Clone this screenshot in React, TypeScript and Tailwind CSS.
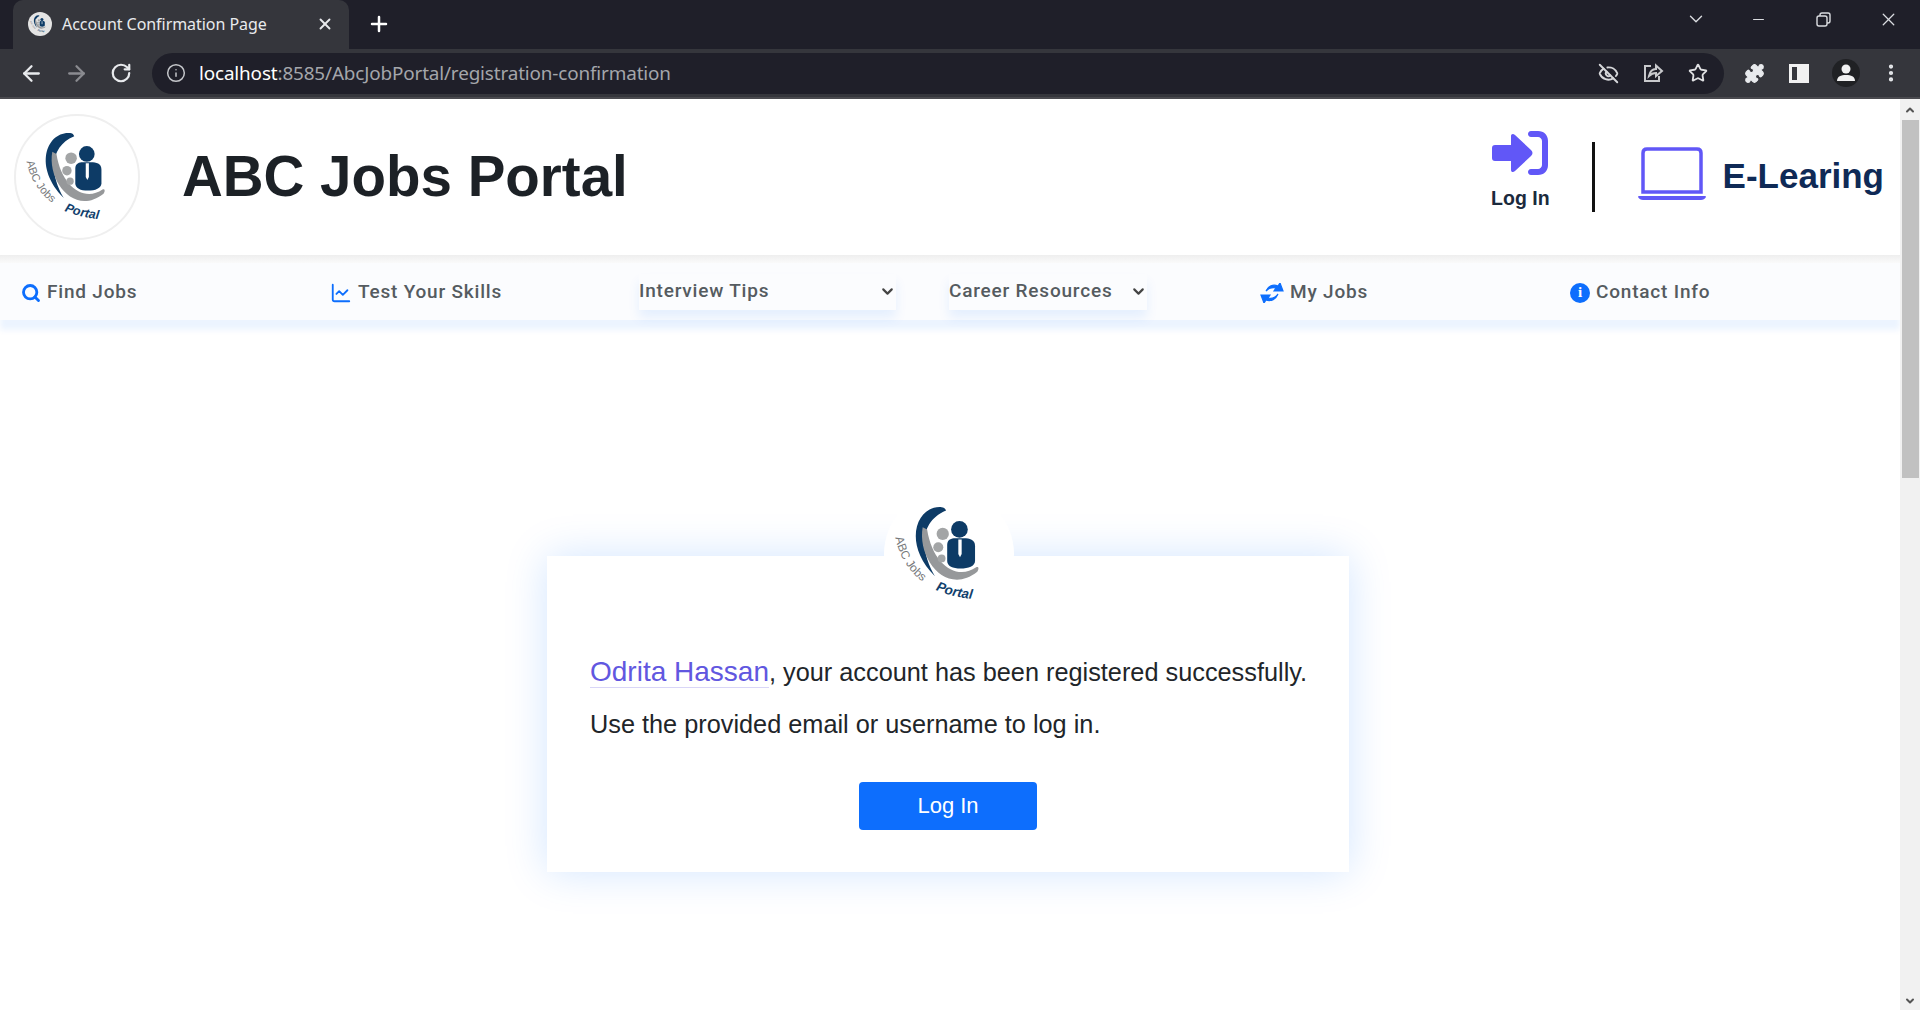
import React from 'react';
import { ArrowLeft, ArrowRight, RotateCw, Info, EyeOff, Star, Puzzle, MoreVertical, ChevronDown, X, Plus, Minus, Search, LineChart } from 'lucide-react';

// The round ABC Jobs mark, used in the header and on top of the card
const Logo: React.FC<{ size: number; id: string }> = ({ size, id }) => (
  <svg width={size} height={size} viewBox="0 0 126 126">
    <defs>
      <path id={`${id}-a`} d="M11 47 C 15 68, 28 86, 47 96" fill="none" />
      <path id={`${id}-b`} d="M50 98 C 62 103, 76 106, 92 107" fill="none" />
    </defs>
    <g transform="translate(58 50) scale(1.08) translate(-58 -50)">
      <path d="M56 20 C 34 18, 20 52, 50 82 C 38 62, 34 34, 60 23 C 59 21, 58 20, 56 20 Z" fill="#0d3b66" />
      <path d="M39 38 C 34 66, 60 100, 88 78 C 90 75, 89 73, 87 74 C 70 86, 48 72, 43 40 Z" fill="#96989a" />
      <circle cx="57" cy="44" r="5.5" fill="#a3a5a6" />
      <circle cx="53" cy="56" r="4.5" fill="#a3a5a6" />
      <circle cx="56" cy="66" r="3.5" fill="#a3a5a6" />
      <circle cx="72" cy="40" r="7.5" fill="#0d3b66" />
      <path d="M61 54 C 61 49, 65 48, 68 48 L 76 48 C 81 48, 86 49, 86 55 L 86 68 C 86 73, 80 75, 73 75 C 66 75, 61 73, 61 68 Z" fill="#0d3b66" />
      <path d="M71 49 L 74 49 L 74 62 L 72.5 65 L 71 62 Z" fill="#fff" />
    </g>
    <text fontFamily="'Liberation Sans', sans-serif" fontSize="11.5" fill="#77797b">
      <textPath href={`#${id}-a`}>ABC Jobs</textPath>
    </text>
    <text fontFamily="'Liberation Sans', sans-serif" fontSize="13" fontWeight="700" fontStyle="italic" fill="#123f6d">
      <textPath href={`#${id}-b`}>Portal</textPath>
    </text>
  </svg>
);

const NavLabel: React.FC<{ icon?: React.ReactNode; label: string }> = ({ icon, label }) => (
  <div className="flex items-center gap-[6px] pt-[2px]">
    {icon}
    <span>{label}</span>
  </div>
);

const NavSelect: React.FC<{ label: string; width: string }> = ({ label, width }) => (
  <div className={`flex h-[36px] items-center justify-between shadow-[0_8px_12px_rgba(13,110,253,0.09)] ${width}`}>
    <span>{label}</span>
    <ChevronDown size={17} strokeWidth={3} className="text-[#444]" />
  </div>
);

const BrowserChrome = () => (
  <div className="font-['Noto_Sans',sans-serif] text-[#e8eaed]">
    <div className="flex h-[49px] items-start bg-[#1f1f29] pl-[13px]">
      <div className="flex h-[49px] w-[336px] items-center rounded-t-[10px] bg-[#35363c] pb-[1px] pl-[15px] pr-[15px]">
        <div className="flex h-[24px] w-[24px] items-center justify-center overflow-hidden rounded-full bg-[#e4e4e4]">
          <Logo size={24} id="logo-tab" />
        </div>
        <span className="ml-[10px] flex-1 text-[16px] tracking-[-0.05px]">Account Confirmation Page</span>
        <X size={18} strokeWidth={2.5} />
      </div>
      <div className="ml-[18px] flex h-[48px] items-center">
        <Plus size={24} strokeWidth={2.5} className="text-white" />
      </div>
      <div className="flex h-full flex-1 items-start justify-end pt-[8px] text-[#dadce0]">
        <ChevronDown size={22} strokeWidth={1.5} className="mr-[43px]" />
        <Minus size={17} strokeWidth={1.5} className="mr-[48px] mt-[3px]" />
        <svg width="17" height="17" viewBox="0 0 17 17" fill="none" stroke="currentColor" strokeWidth="1.4" className="mr-[46px] mt-[3px]">
          <rect x="2" y="5" width="10" height="10" rx="2" />
          <path d="M5 5 V4 C5 2.8 5.8 2 7 2 H13 C14.2 2 15 2.8 15 4 V10 C15 11.2 14.2 12 13 12 H12" />
        </svg>
        <X size={21} strokeWidth={1.5} className="mr-[21px] mt-[1px]" />
      </div>
    </div>
    <div className="flex h-[50px] items-center border-b-2 border-[#4a4a4f] bg-[#35363c]">
      <ArrowLeft size={25} strokeWidth={2.2} className="ml-[19px]" />
      <ArrowRight size={25} strokeWidth={2.2} className="ml-[20px] text-[#8a8b90]" />
      <RotateCw size={22} strokeWidth={2.4} className="ml-[21px]" />
      <div className="ml-[20px] flex h-[41px] w-[1572px] items-center rounded-full bg-[#1f1f29] pl-[14px] pr-[16px]">
        <Info size={20} strokeWidth={1.8} className="text-[#c4c6ca]" />
        <div className="ml-[13px] flex-1 text-[18.9px] tracking-[-0.15px]">
          <span className="text-white">localhost</span>
          <span className="text-[#a4a6ab]">:8585/AbcJobPortal/registration-confirmation</span>
        </div>
        <EyeOff size={21} strokeWidth={2.2} className="text-[#d6d7da]" />
        <svg width="22" height="22" viewBox="0 0 22 22" fill="none" stroke="#c8c9cc" strokeWidth="2" className="ml-[23px]">
          <path d="M9 4 H3 V19 H17 V14" />
          <path d="M7 14 C8 9 11 7 14 7 V3.5 L20 9 L14 14 V11 C11 11 9 12 7 14 Z" />
        </svg>
        <Star size={20} strokeWidth={2.2} className="ml-[24px] text-[#dfe0e2]" />
      </div>
      <Puzzle size={21} fill="#e8eaed" strokeWidth={1.5} className="ml-[20px]" />
      <div className="ml-[24px] flex h-[19px] w-[20px] justify-end border-[3px] border-[#f1f1f1]">
        <div className="w-[9px] bg-[#f1f1f1]" />
      </div>
      <div className="ml-[23px] flex h-[28px] w-[28px] items-center justify-center rounded-full bg-[#202124]">
        <svg width="20" height="20" viewBox="0 0 20 20" fill="#f1f1f1">
          <circle cx="10" cy="6" r="4.5" />
          <path d="M1 18 C1 13.5 5 12 10 12 C15 12 19 13.5 19 18 Z" />
        </svg>
      </div>
      <MoreVertical size={22} strokeWidth={2.6} className="ml-[20px]" />
    </div>
  </div>
);

const Scrollbar = () => (
  <div className="flex w-[20px] flex-col items-center bg-[#f1f1f1]">
    <ChevronDown size={12} strokeWidth={4} className="mt-[5px] rotate-180 text-[#555]" />
    <div className="mt-[4px] h-[358px] w-[17px] bg-[#c1c1c1]" />
    <div className="flex-1" />
    <ChevronDown size={12} strokeWidth={4} className="mb-[3px] text-[#555]" />
  </div>
);

const App: React.FC = () => {
  return (
    <div className="flex h-[1010px] flex-col overflow-hidden bg-white font-['Liberation_Sans',sans-serif]">
      <BrowserChrome />
      <div className="flex min-h-0 flex-1">
        <div className="min-w-0 flex-1">
          {/* Top header */}
          <header className="flex h-[156px] items-center bg-white pl-[14px] pr-[16px]">
            <div className="rounded-full border-2 border-[#efefef]">
              <Logo size={122} id="logo-header" />
            </div>
            <h1 className="ml-[42px] flex-1 text-[56.5px] font-bold text-[#1c2126]">ABC Jobs Portal</h1>
            <div className="mb-[12px] flex flex-col items-center">
              <svg width="58" height="50" viewBox="0 2 58 46" fill="#6157f7">
                <path d="M1 20 C1 18 2 17 4 17 H20 V8 C20 6 22 5 24 7 L40 22 C42 24 42 26 40 28 L24 43 C22 45 20 44 20 42 V33 H4 C2 33 1 32 1 30 Z" />
                <path d="M40 3 H47 C53 3 57 7 57 13 V37 C57 43 53 47 47 47 H40 C36 47 36 41 40 41 H47 C49 41 51 39 51 37 V13 C51 11 49 9 47 9 H40 C36 9 36 3 40 3 Z" />
              </svg>
              <span className="mt-[6px] text-[19.5px] font-bold text-[#1b2a3d]">Log In</span>
            </div>
            <div className="mx-[42px] h-[70px] w-[3px] bg-[#111]" />
            <svg width="70" height="54" viewBox="0 0 70 54" fill="none" className="mb-[6px]">
              <path d="M6 45 V6 C6 3.5 7.5 2 10 2 H60 C62.5 2 64 3.5 64 6 V45 Z" stroke="#6157f7" strokeWidth="3.5" />
              <path d="M2 49 H68 C69 49 69 50 69 50 C68 52 66 53 64 53 H6 C4 53 2 52 1 50 C1 50 1 49 2 49 Z" fill="#6157f7" />
            </svg>
            <span className="mb-[2px] ml-[16px] text-[35px] font-bold text-[#0f2a56]">E-Learing</span>
          </header>

          {/* Main navigation */}
          <div className="h-[8px] bg-gradient-to-b from-[#eeeeee] to-[#fafafa]" />
          <nav className="grid h-[57px] w-full grid-cols-[309px_309px_310px_311px_310px_1fr] items-center bg-[#fbfcfe] pl-[21px] font-['Roboto',sans-serif] text-[19px] font-medium tracking-[0.8px] text-[#555b60] shadow-[0_10px_6px_rgba(13,110,253,0.08)]">
            <NavLabel label="Find Jobs" icon={<Search size={20} strokeWidth={3.4} className="text-[#0d6efd]" />} />
            <NavLabel label="Test Your Skills" icon={<LineChart size={22} strokeWidth={2} className="text-[#0d6efd]" />} />
            <NavSelect label="Interview Tips" width="w-[257px]" />
            <NavSelect label="Career Resources" width="w-[198px]" />
            <NavLabel
              label="My Jobs"
              icon={
                <svg width="24" height="20" viewBox="0 0 24 20" fill="#0d6efd" stroke="#0d6efd" strokeWidth="1.2">
                  <path d="M6 8 C8 3 13 1 18 3 L20 0 L23 8 L14 8 L16 5 C12 4 9 5 6 8 Z" />
                  <path d="M18 11 C16 16 11 19 6 17 L4 20 L1 12 L10 12 L8 15 C12 16 15 15 18 11 Z" />
                </svg>
              }
            />
            <NavLabel
              label="Contact Info"
              icon={
                <div className="flex h-[20px] w-[20px] items-center justify-center rounded-full bg-[#0d6efd] font-['Liberation_Serif',serif] text-[15px] font-bold tracking-normal text-white">
                  i
                </div>
              }
            />
          </nav>

          {/* Confirmation card */}
          <main className="pt-[236px]">
            <div className="relative ml-[547px] h-[316px] w-[802px] bg-white pl-[43px] pt-[92px] text-[25.3px] text-[#212529] shadow-[0_0_40px_rgba(13,110,253,0.18)]">
              <div className="absolute left-[337px] top-[-67px] rounded-full bg-white">
                <Logo size={130} id="logo-card" />
              </div>
              <p className="whitespace-nowrap leading-[48px]">
                <span className="border-b border-[#d9d6f7] text-[28px] text-[#6157e0]">Odrita Hassan</span>, your account has been registered successfully.
              </p>
              <p className="mt-[4px] whitespace-nowrap leading-[48px]">Use the provided email or username to log in.</p>
              <div className="mt-[34px] flex justify-center pr-[43px]">
                <button className="h-[48px] w-[178px] rounded-[4px] bg-[#0d6efd] pb-[1px] text-[22px] text-white">Log In</button>
              </div>
            </div>
          </main>
        </div>
        <Scrollbar />
      </div>
    </div>
  );
};

export default App;
